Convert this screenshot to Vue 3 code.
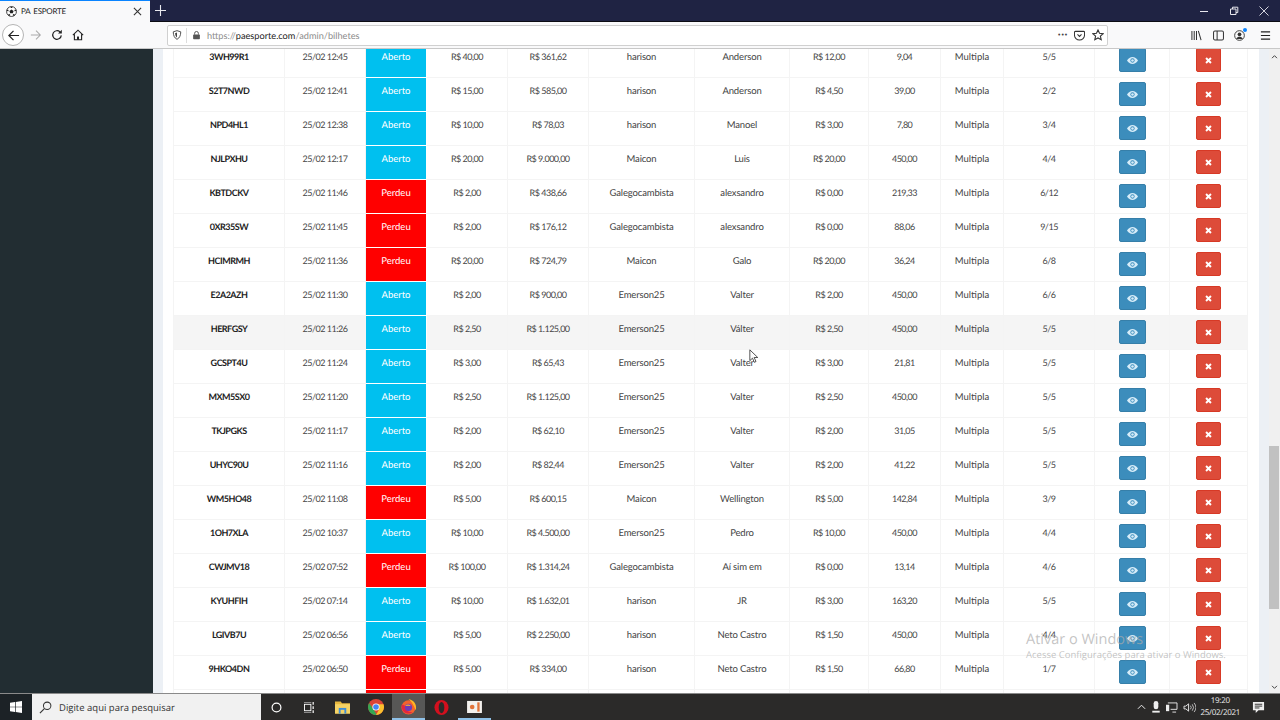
<template>
  <div class="screen">
    <div class="tabbar">
      <div class="tab">
        <svg class="favicon" viewBox="0 0 16 16" width="11" height="11">
          <circle cx="8" cy="8" r="7.2" fill="#fff" stroke="#222" stroke-width="1.2" />
          <path d="M8 5l3 2.2-1.1 3.4H6.1L5 7.2z" fill="#222" />
          <path d="M8 1v2M1.5 6l2 .8M14.5 6l-2 .8M4 14l1.3-2M12 14l-1.3-2" stroke="#222" stroke-width="2.2" />
        </svg>
        <span class="tab-title">PA ESPORTE</span>
        <svg class="tab-close" viewBox="0 0 10 10" width="9" height="9">
          <path d="M1 1l8 8M9 1l-8 8" stroke="#333" stroke-width="1.2" />
        </svg>
      </div>
      <svg class="tab-new" viewBox="0 0 12 12" width="11" height="11">
        <path d="M6 0v12M0 6h12" stroke="#e8e8ee" stroke-width="1.2" />
      </svg>
      <div class="window-controls">
        <svg viewBox="0 0 10 10" width="10" height="10"><path d="M1 5.5h8" stroke="#e8e8ee" /></svg>
        <svg viewBox="0 0 10 10" width="10" height="10">
          <path d="M1.5 3h5.5v5.5H1.5zM3.5 3V1.2h5.3v5.3H7" fill="none" stroke="#e8e8ee" />
        </svg>
        <svg viewBox="0 0 10 10" width="10" height="10"><path d="M.5.5l9 9M9.5.5l-9 9" stroke="#e8e8ee" stroke-width=".9" /></svg>
      </div>
    </div>

    <div class="toolbar">
      <div class="nav-back">
        <svg viewBox="0 0 14 14" width="13" height="13">
          <path d="M13 7H2M7 2L2 7l5 5" fill="none" stroke="#222" stroke-width="1.3" />
        </svg>
      </div>
      <svg class="nav-forward" viewBox="0 0 14 14" width="12" height="12">
        <path d="M1 7h11M7 2l5 5-5 5" fill="none" stroke="#aaa" stroke-width="1.2" />
      </svg>
      <svg class="nav-reload" viewBox="0 0 14 14" width="12" height="12">
        <path d="M12 7.5A5 5 0 1 1 10.5 3.4" fill="none" stroke="#222" stroke-width="1.4" />
        <path d="M12.6 .8v4.4H8.2z" fill="#222" />
      </svg>
      <svg class="nav-home" viewBox="0 0 14 14" width="12" height="12">
        <path d="M1 7.2L7 1.4l6 5.8M2.8 6v6.6h8.4V6" fill="none" stroke="#222" stroke-width="1.3" />
        <path d="M5.8 12.6V8.8h2.4v3.8" fill="#222" />
      </svg>

      <div class="urlbar">
        <svg class="shield" viewBox="0 0 12 12" width="10" height="10">
          <path d="M6 .8l4.5 1.4c0 4.400-1.500 7.500-4.500 9-3-1.500-4.500-4.600-4.500-9z" fill="none" stroke="#444" stroke-width="1.100" />
          <path d="M6 3v6c-1.500-1-2.200-3-2.300-5.200z" fill="#444" />
        </svg>
        <span class="url-sep"></span>
        <svg class="lock" viewBox="0 0 12 12" width="9" height="10">
          <path d="M3.500 5.500V3.800a2.500 2.500 0 0 1 5 0v1.700" fill="none" stroke="#555" stroke-width="1.300" />
          <rect x="1.500" y="5.300" width="9" height="6.200" rx="1" fill="#555" />
        </svg>
        <span class="url"><span class="url-dim">https://</span><span class="url-host">paesporte.com</span><span class="url-dim">/admin/bilhetes</span></span>
        <span class="url-dots">•••</span>
        <svg class="pocket" viewBox="0 0 12 12" width="11" height="11">
          <path d="M1.500 1.500h9a1 1 0 0 1 1 1v3a5.500 5.500 0 0 1-11 0v-3a1 1 0 0 1 1-1z" fill="none" stroke="#333" stroke-width="1.100" />
          <path d="M3.800 4.800L6 7l2.200-2.200" fill="none" stroke="#333" stroke-width="1.100" />
        </svg>
        <svg class="star" viewBox="0 0 12 12" width="12" height="12">
          <path d="M6 1l1.500 3.300 3.600.4-2.700 2.400.8 3.600L6 8.900l-3.200 1.800.8-3.600L.9 4.700l3.600-.4z" fill="none" stroke="#333" stroke-width="1.100" />
        </svg>
      </div>

      <svg class="tool-library" viewBox="0 0 12 12" width="11" height="11">
        <path d="M1 1v10M3.500 1v10M6 1v10M8 1l3 10" stroke="#333" stroke-width="1.100" />
      </svg>
      <svg class="tool-sidebar" viewBox="0 0 12 12" width="11" height="11">
        <rect x=".6" y="1.200" width="10.800" height="9.600" rx="1.500" fill="none" stroke="#333" stroke-width="1.100" />
        <path d="M4.500 1.200v9.600" stroke="#333" stroke-width="1.100" />
      </svg>
      <div class="tool-account">
        <svg viewBox="0 0 12 12" width="11" height="11">
          <circle cx="6" cy="6" r="5.300" fill="none" stroke="#333" />
          <circle cx="6" cy="4.700" r="2" fill="#333" />
          <path d="M2.500 9.800c.6-1.800 2-2.400 3.500-2.400s2.900.6 3.500 2.400z" fill="#333" />
        </svg>
        <span class="account-dot"></span>
      </div>
      <svg class="tool-menu" viewBox="0 0 12 12" width="11" height="11">
        <path d="M1 2h10M1 6h10M1 10h10" stroke="#222" stroke-width="1.200" />
      </svg>
    </div>

    <div class="main">
      <aside class="sidebar"></aside>
      <div class="content">
        <div class="box">
          <table class="bets">
            <colgroup>
              <col v-for="(w, i) in colWidths" :key="i" :style="{ width: w + 'px' }" />
            </colgroup>
            <tbody>
              <tr v-for="row in rows" :key="row[0]" :class="{ hover: row[0] === 'HERFGSY' }">
                <td class="code">{{ row[0] }}</td>
                <td class="num">{{ row[1] }}</td>
                <td class="status" :class="row[2] === 'Perdeu' ? 'lost' : 'open'">{{ row[2] }}</td>
                <td class="num">{{ row[3] }}</td>
                <td class="num">{{ row[4] }}</td>
                <td class="name">{{ row[5] }}</td>
                <td class="name">{{ row[6] }}</td>
                <td class="num">{{ row[7] }}</td>
                <td class="num">{{ row[8] }}</td>
                <td>Multipla</td>
                <td class="num">{{ row[9] }}</td>
                <td class="action">
                  <button class="btn view">
                    <svg viewBox="0 0 16 10" width="11" height="7">
                      <path d="M0 5c2-3 4.800-5 8-5s6 2 8 5c-2 3-4.800 5-8 5S2 8 0 5z" fill="#d6ecf8" />
                      <circle cx="8" cy="5" r="3.100" fill="#3c8dbc" />
                      <circle cx="8" cy="5" r="1.900" fill="#d6ecf8" />
                    </svg>
                  </button>
                </td>
                <td class="action">
                  <button class="btn remove">
                    <svg viewBox="0 0 10 10" width="7" height="7">
                      <path d="M1.500 1.500l7 7M8.500 1.500l-7 7" stroke="#fff" stroke-width="2.800" />
                    </svg>
                  </button>
                </td>
              </tr>
              <!-- linha cortada pela barra de tarefas, so aparece o topo -->
              <tr>
                <td v-for="n in 2" :key="n"></td>
                <td class="status lost"></td>
                <td v-for="n in 10" :key="n"></td>
              </tr>
            </tbody>
          </table>
        </div>
      </div>
      <div class="scrollbar">
        <svg class="scroll-up" viewBox="0 0 8 6" width="7" height="5"><path d="M1 5l3-3 3 3" fill="none" stroke="#444" stroke-width="1.200" /></svg>
        <div class="scroll-thumb"></div>
        <svg class="scroll-down" viewBox="0 0 8 6" width="7" height="5"><path d="M1 1l3 3 3-3" fill="none" stroke="#444" stroke-width="1.200" /></svg>
      </div>

      <div class="watermark">
        <div class="wm-title">Ativar o Windows</div>
        <div class="wm-sub">Acesse Configurações para ativar o Windows.</div>
      </div>
      <svg class="cursor" viewBox="0 0 12 18" width="10" height="15">
        <path d="M1 1v13l3.200-3 2.200 5 2-1-2.200-4.800H10.500z" fill="#fff" stroke="#333" stroke-width="1" />
      </svg>
    </div>

    <div class="taskbar">
      <div class="start">
        <svg viewBox="0 0 12 12" width="12" height="12">
          <path d="M0 1.700L5 1v4.700H0zM5.700.9L12 0v5.700H5.700zM0 6.300h5V11l-5-.7zM5.700 6.300H12V12l-6.300-.9z" fill="#fff" />
        </svg>
      </div>
      <div class="search">
        <svg viewBox="0 0 14 14" width="13" height="13">
          <circle cx="8.800" cy="5.200" r="4" fill="none" stroke="#333" stroke-width="1.100" />
          <path d="M5.800 8.200L1 13" stroke="#333" stroke-width="1.200" />
        </svg>
        <span>Digite aqui para pesquisar</span>
      </div>
      <div class="task-icons">
        <div class="task"><svg viewBox="0 0 12 12" width="11" height="11"><circle cx="6" cy="6" r="4.800" fill="none" stroke="#fff" stroke-width="1.300" /></svg></div>
        <div class="task">
          <svg viewBox="0 0 14 12" width="13" height="11">
            <path d="M1 0h8M1 12h8" stroke="#fff" />
            <rect x="1.500" y="2.500" width="7" height="7" fill="none" stroke="#fff" />
            <path d="M11 0v3M11 4.500v3M11 9v3" stroke="#fff" stroke-width="1.300" />
          </svg>
        </div>
        <div class="task">
          <svg viewBox="0 0 16 14" width="15" height="14">
            <path d="M0 1h6l1.500 2H16v11H0z" fill="#e8b83e" />
            <path d="M0 4h16v10H0z" fill="#f6d365" />
            <rect x="4" y="8" width="8" height="6" fill="#3f8ed6" />
            <rect x="6" y="10" width="4" height="4" fill="#f6d365" />
          </svg>
        </div>
        <div class="task">
          <svg viewBox="0 0 16 16" width="16" height="16">
            <circle cx="8" cy="8" r="8" fill="#db4437" />
            <path d="M8 16a8 8 0 0 1-6.900-12L5 9.500 9 16z" fill="#34a853" />
            <path d="M15.500 5.200A8 8 0 0 1 8 16l3.400-6.300L10 5.200z" fill="#fbc02d" />
            <circle cx="8" cy="8" r="3.600" fill="#fff" />
            <circle cx="8" cy="8" r="2.800" fill="#4285f4" />
          </svg>
        </div>
        <div class="task active">
          <svg viewBox="0 0 18 18" width="17" height="17">
            <circle cx="9" cy="10" r="7.500" fill="#f3622c" />
            <path d="M9 1c5 1 8 4.500 8 9 0 1-.2 2-.5 3C15 8 12.500 4 9 1z" fill="#ffb524" />
            <path d="M2 7c-.8 3 0 6 2.500 8C7 17 11 17 13.500 15 9 15.500 5 12.500 5 8z" fill="#e3263f" />
            <circle cx="9" cy="10" r="3.800" fill="#6d3bb8" />
            <path d="M5.500 8c2-1.500 4-1.500 6 0-1 .5-2 .5-3 .3-.8.200-2 .200-3-.3z" fill="#ffb524" />
          </svg>
        </div>
        <div class="task">
          <svg viewBox="0 0 16 16" width="15" height="15">
            <ellipse cx="8" cy="8" rx="7.500" ry="8" fill="#d3101e" />
            <ellipse cx="8" cy="8" rx="3" ry="6" fill="#2b2a29" />
          </svg>
        </div>
        <div class="task running">
          <svg viewBox="0 0 16 14" width="15" height="13">
            <rect x="0" y="1" width="16" height="13" fill="#f3f1ee" />
            <circle cx="5.500" cy="7.500" r="2.500" fill="#e2743a" />
            <rect x="11" y="2.500" width="2.500" height="10" fill="#e2743a" />
          </svg>
        </div>
      </div>
      <div class="tray">
        <svg class="tray-up" viewBox="0 0 10 6" width="9" height="6"><path d="M1 5l4-4 4 4" fill="none" stroke="#eee" stroke-width="1.100" /></svg>
        <svg viewBox="0 0 8 14" width="8" height="13">
          <rect x="1.500" y="0" width="5" height="9" rx="2.500" fill="#eee" />
          <path d="M0 11.500h8" stroke="#eee" stroke-width="2" />
        </svg>
        <svg viewBox="0 0 14 12" width="13" height="11">
          <path d="M3 1h10v7H6" fill="none" stroke="#eee" />
          <rect x="1" y="3" width="3.500" height="7" fill="#eee" />
          <path d="M8 11h4" stroke="#eee" />
        </svg>
        <svg viewBox="0 0 14 12" width="13" height="11">
          <path d="M1 4.500h2L6 2v8L3 7.500H1z" fill="none" stroke="#eee" />
          <path d="M8 4a3 3 0 0 1 0 4M10 2.500a5.500 5.500 0 0 1 0 7M12 1a8 8 0 0 1 0 10" fill="none" stroke="#eee" stroke-width=".8" />
        </svg>
        <div class="clock"><span>19:20</span><span>25/02/2021</span></div>
        <svg class="notify" viewBox="0 0 14 14" width="13" height="13">
          <path d="M1 1h12v9H7l-3 3v-3H1z" fill="#eee" />
          <path d="M3 3.500h8M3 5.500h8M3 7.500h5" stroke="#2b2a29" />
        </svg>
      </div>
    </div>
  </div>
</template>

<script setup>
const colWidths = [111, 81, 61, 81, 81, 106, 95, 79, 72, 63, 91, 75, 78]

// codigo, data, status, aposta, retorno, cambista, cliente, comissao, cotacao, jogos
const rows = [
  ['3WH99R1', '25/02 12:45', 'Aberto', 'R$ 40,00', 'R$ 361,62', 'harison', 'Anderson', 'R$ 12,00', '9,04', '5/5'],
  ['S2T7NWD', '25/02 12:41', 'Aberto', 'R$ 15,00', 'R$ 585,00', 'harison', 'Anderson', 'R$ 4,50', '39,00', '2/2'],
  ['NPD4HL1', '25/02 12:38', 'Aberto', 'R$ 10,00', 'R$ 78,03', 'harison', 'Manoel', 'R$ 3,00', '7,80', '3/4'],
  ['NJLPXHU', '25/02 12:17', 'Aberto', 'R$ 20,00', 'R$ 9.000,00', 'Maicon', 'Luis', 'R$ 20,00', '450,00', '4/4'],
  ['KBTDCKV', '25/02 11:46', 'Perdeu', 'R$ 2,00', 'R$ 438,66', 'Galegocambista', 'alexsandro', 'R$ 0,00', '219,33', '6/12'],
  ['0XR35SW', '25/02 11:45', 'Perdeu', 'R$ 2,00', 'R$ 176,12', 'Galegocambista', 'alexsandro', 'R$ 0,00', '88,06', '9/15'],
  ['HCIMRMH', '25/02 11:36', 'Perdeu', 'R$ 20,00', 'R$ 724,79', 'Maicon', 'Galo', 'R$ 20,00', '36,24', '6/8'],
  ['E2A2AZH', '25/02 11:30', 'Aberto', 'R$ 2,00', 'R$ 900,00', 'Emerson25', 'Valter', 'R$ 2,00', '450,00', '6/6'],
  ['HERFGSY', '25/02 11:26', 'Aberto', 'R$ 2,50', 'R$ 1.125,00', 'Emerson25', 'Válter', 'R$ 2,50', '450,00', '5/5'],
  ['GCSPT4U', '25/02 11:24', 'Aberto', 'R$ 3,00', 'R$ 65,43', 'Emerson25', 'Valter', 'R$ 3,00', '21,81', '5/5'],
  ['MXM5SX0', '25/02 11:20', 'Aberto', 'R$ 2,50', 'R$ 1.125,00', 'Emerson25', 'Valter', 'R$ 2,50', '450,00', '5/5'],
  ['TKJPGKS', '25/02 11:17', 'Aberto', 'R$ 2,00', 'R$ 62,10', 'Emerson25', 'Valter', 'R$ 2,00', '31,05', '5/5'],
  ['UHYC90U', '25/02 11:16', 'Aberto', 'R$ 2,00', 'R$ 82,44', 'Emerson25', 'Valter', 'R$ 2,00', '41,22', '5/5'],
  ['WM5HO48', '25/02 11:08', 'Perdeu', 'R$ 5,00', 'R$ 600,15', 'Maicon', 'Wellington', 'R$ 5,00', '142,84', '3/9'],
  ['1OH7XLA', '25/02 10:37', 'Aberto', 'R$ 10,00', 'R$ 4.500,00', 'Emerson25', 'Pedro', 'R$ 10,00', '450,00', '4/4'],
  ['CWJMV18', '25/02 07:52', 'Perdeu', 'R$ 100,00', 'R$ 1.314,24', 'Galegocambista', 'Aí sim em', 'R$ 0,00', '13,14', '4/6'],
  ['KYUHFIH', '25/02 07:14', 'Aberto', 'R$ 10,00', 'R$ 1.632,01', 'harison', 'JR', 'R$ 3,00', '163,20', '5/5'],
  ['LGIVB7U', '25/02 06:56', 'Aberto', 'R$ 5,00', 'R$ 2.250,00', 'harison', 'Neto Castro', 'R$ 1,50', '450,00', '4/4'],
  ['9HKO4DN', '25/02 06:50', 'Perdeu', 'R$ 5,00', 'R$ 334,00', 'harison', 'Neto Castro', 'R$ 1,50', '66,80', '1/7']
]
</script>

<style scoped>
.screen {
  width: 1280px;
  height: 720px;
  display: flex;
  flex-direction: column;
  overflow: hidden;
  font-family: Lato, "Liberation Sans", sans-serif;
  text-rendering: geometricPrecision;
  color: #333;
}

.tabbar {
  height: 22px;
  flex-shrink: 0;
  display: flex;
  align-items: center;
  background: #1f2343;
  border-bottom: 1px solid #0c0c14;
  box-sizing: border-box;
}

.tab {
  width: 150px;
  height: 22px;
  box-sizing: border-box;
  display: flex;
  align-items: center;
  padding: 0 8px 0 6px;
  background: #f9f9fa;
  border-top: 1px solid #0a84ff;
  font-size: 8px;
  letter-spacing: -0.25px;
  word-spacing: 1.5px;
  color: #222;
}

.tab-title {
  flex: 1;
  margin-left: 4px;
}

.tab-new {
  margin-left: 5px;
}

.window-controls {
  margin-left: auto;
  display: flex;
  gap: 20px;
  padding-right: 11px;
}

.toolbar {
  height: 27px;
  flex-shrink: 0;
  display: flex;
  align-items: center;
  background: #f9f9fa;
  border-bottom: 1px solid #c8c8c8;
  box-sizing: border-box;
  padding-left: 2px;
}

.nav-back {
  width: 22px;
  height: 22px;
  box-sizing: border-box;
  border: 1px solid #b5b5b5;
  border-radius: 50%;
  background: #fff;
  display: flex;
  align-items: center;
  justify-content: center;
}

.nav-forward {
  margin-left: 6px;
}

.nav-reload {
  margin-left: 9px;
}

.nav-home {
  margin-left: 9px;
}

.urlbar {
  width: 941px;
  height: 21px;
  margin-left: 83px;
  box-sizing: border-box;
  background: #fff;
  border: 1px solid #d0d0d0;
  border-radius: 2px;
  display: flex;
  align-items: center;
  padding: 0 3px 0 4px;
}

.url-sep {
  width: 1px;
  height: 15px;
  background: #ddd;
  margin: 0 5px 0 4px;
}

.url {
  flex: 1;
  margin-left: 6px;
  font-size: 9.2px;
  white-space: nowrap;
}

.url-dim {
  color: #8c8c8c;
}

.url-host {
  color: #222;
}

.url-dots {
  font-size: 5px;
  letter-spacing: 0.5px;
  color: #444;
  margin-right: 6px;
}

.star {
  margin-left: 7px;
}

.tool-library {
  margin-left: 83px;
}

.tool-sidebar {
  margin-left: 11px;
}

.tool-account {
  position: relative;
  display: flex;
  margin-left: 10px;
}

.account-dot {
  position: absolute;
  top: -2px;
  right: -2px;
  width: 4px;
  height: 4px;
  border-radius: 50%;
  background: #0a84ff;
}

.tool-menu {
  margin-left: 15px;
}

.main {
  position: relative;
  flex: 1;
  min-height: 0;
  display: flex;
  overflow: hidden;
}

.sidebar {
  width: 153px;
  flex-shrink: 0;
  background: #222d32;
}

.content {
  flex: 1;
  min-width: 0;
  background: #ecf0f5;
  padding: 0 10px;
}

.box {
  height: 100%;
  background: #fff;
  padding: 0 11px 0 10px;
  overflow: hidden;
}

.bets {
  table-layout: fixed;
  width: 1074px;
  border-collapse: collapse;
  margin-top: -6px;
  font-size: 9.5px;
  color: #444;
}

.bets td {
  height: 34px;
  box-sizing: border-box;
  padding: 6px 0 0;
  text-align: center;
  vertical-align: top;
  line-height: 15px;
  border: 1px solid #f4f4f4;
  white-space: nowrap;
}

.bets td.num {
  padding-top: 5px;
  font-size: 9px;
  letter-spacing: -0.5px;
}

.bets td.name {
  letter-spacing: -0.15px;
}

.bets tr.hover td {
  background: #f5f5f5;
}

.bets td.code {
  padding-top: 5px;
  font-size: 9px;
  font-weight: 700;
  letter-spacing: -0.5px;
  color: #222;
}

.bets td.status {
  color: #fff;
  border: 1px solid #fff;
}

.bets td.open,
.bets tr.hover td.open {
  background: #00c0ef;
}

.bets td.lost {
  background: #ff0000;
}

.bets td.action {
  padding-top: 4px;
}

.btn {
  height: 24px;
  padding: 0;
  border: 1px solid transparent;
  border-radius: 2px;
  display: inline-flex;
  align-items: center;
  justify-content: center;
}

.btn.view {
  width: 27px;
  background: #3c8dbc;
  border-color: #367fa9;
}

.btn.remove {
  width: 25px;
  background: #dd4b39;
  border-color: #d73925;
}

.scrollbar {
  width: 11px;
  flex-shrink: 0;
  position: relative;
  background: #f0f0f0;
}

.scroll-up,
.scroll-down {
  position: absolute;
  left: 2px;
}

.scroll-up {
  top: 5px;
}

.scroll-down {
  bottom: 3px;
}

.scroll-thumb {
  position: absolute;
  top: 397px;
  left: 0;
  width: 10px;
  height: 163px;
  background: #c1c1c1;
}

.watermark {
  position: absolute;
  left: 1026px;
  top: 581px;
  color: rgba(170, 170, 170, 0.7);
  pointer-events: none;
}

.wm-title {
  font-family: "Open Sans", sans-serif;
  font-size: 14.5px;
  line-height: 20px;
}

.wm-sub {
  font-family: "Open Sans", sans-serif;
  font-size: 9.5px;
  line-height: 14px;
  margin-top: -2px;
}

.cursor {
  position: absolute;
  left: 749px;
  top: 300px;
}

.taskbar {
  height: 27px;
  flex-shrink: 0;
  display: flex;
  align-items: stretch;
  background: #2b2a29;
  border-top: 1px solid #8a8a8a;
  box-sizing: border-box;
}

.start {
  width: 32px;
  display: flex;
  align-items: center;
  justify-content: center;
  background: #1c2226;
}

.search {
  width: 229px;
  display: flex;
  align-items: center;
  gap: 7px;
  padding-left: 7px;
  box-sizing: border-box;
  background: #f1f1f1;
  font-family: "Open Sans", sans-serif;
  font-size: 9.5px;
  color: #333;
}

.task-icons {
  display: flex;
  margin-left: -1px;
}

.task {
  width: 33px;
  display: flex;
  align-items: center;
  justify-content: center;
  box-sizing: border-box;
}

.task.active {
  background: #575756;
  border-bottom: 2px solid #8fc1e8;
}

.task.running {
  border-bottom: 2px solid #8fc1e8;
}

.tray {
  margin-left: auto;
  display: flex;
  align-items: center;
  gap: 5px;
  padding-right: 15px;
}

.tray-up {
  margin-right: 1px;
}

.clock {
  display: flex;
  flex-direction: column;
  align-items: center;
  margin: 0 7px 0 0;
  font-family: "Open Sans", sans-serif;
  font-size: 8px;
  letter-spacing: -0.3px;
  line-height: 12px;
  color: #eee;
}
</style>

<style>
html,
body {
  margin: 0;
  background: #fff;
}
</style>
